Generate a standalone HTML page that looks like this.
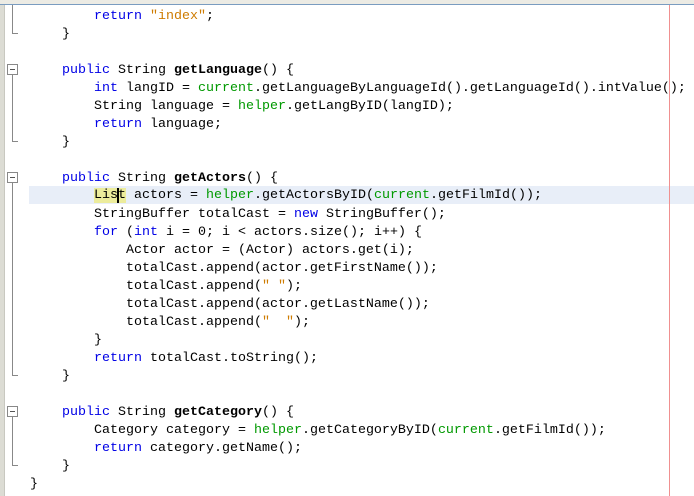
<!DOCTYPE html>
<html><head><style>
body{margin:0;width:694px;height:496px;overflow:hidden;background:#fff;position:relative;font-family:"Liberation Mono",monospace;font-size:13.33px;}
.top{position:absolute;left:0;top:0;width:694px;height:4px;background:#ecebe4;border-bottom:1px solid #7a9cc0;}
.strip{position:absolute;left:0;top:5px;width:4px;height:491px;background:#dcdcd4;border-right:1px solid #c8c8c0;}
.hl{position:absolute;left:29px;top:186px;width:665px;height:18px;background:#e8eef8;}
.margin{position:absolute;left:669px;top:5px;width:1px;height:491px;background:#f09090;}
.l{position:absolute;left:30px;height:18px;line-height:18px;margin-top:2px;white-space:pre;color:#000;}
.k{color:#0000e6}.g{color:#009900}.s{color:#ce7b00}b{font-weight:bold}
.box{position:absolute;left:7px;width:9px;height:9px;border:1px solid #888;background:#fff;}
.box:after{content:"";position:absolute;left:2px;top:4px;width:5px;height:1px;background:#555;}
.vl{position:absolute;left:12px;width:1px;background:#888;}
.end{position:absolute;left:12px;width:6px;height:1px;background:#888;}
.cur{background:#ecec9c}
.caret{position:absolute;left:117px;top:188px;width:2px;height:15px;background:#000;}
</style></head><body>
<div class="top"></div><div class="strip"></div><div class="hl"></div><div class="margin"></div>
<div class="vl" style="top:5px;height:28px"></div><div class="end" style="top:33px"></div>
<div class="box" style="top:64px"></div><div class="vl" style="top:75px;height:66px"></div><div class="end" style="top:141px"></div>
<div class="box" style="top:172px"></div><div class="vl" style="top:183px;height:192px"></div><div class="end" style="top:375px"></div>
<div class="box" style="top:406px"></div><div class="vl" style="top:417px;height:48px"></div><div class="end" style="top:465px"></div>
<div class="l" style="top:6px">        <span class="k">return</span> <span class="s">"index"</span>;</div>
<div class="l" style="top:24px">    }</div>
<div class="l" style="top:60px">    <span class="k">public</span> String <b>getLanguage</b>() {</div>
<div class="l" style="top:78px">        <span class="k">int</span> langID = <span class="g">current</span>.getLanguageByLanguageId().getLanguageId().intValue();</div>
<div class="l" style="top:96px">        String language = <span class="g">helper</span>.getLangByID(langID);</div>
<div class="l" style="top:114px">        <span class="k">return</span> language;</div>
<div class="l" style="top:132px">    }</div>
<div class="l" style="top:168px">    <span class="k">public</span> String <b>getActors</b>() {</div>
<div class="l" style="top:186px;margin-top:0;line-height:20px">        <span class="cur">List</span> actors = <span class="g">helper</span>.getActorsByID(<span class="g">current</span>.getFilmId());</div>
<div class="l" style="top:204px">        StringBuffer totalCast = <span class="k">new</span> StringBuffer();</div>
<div class="l" style="top:222px">        <span class="k">for</span> (<span class="k">int</span> i = 0; i &lt; actors.size(); i++) {</div>
<div class="l" style="top:240px">            Actor actor = (Actor) actors.get(i);</div>
<div class="l" style="top:258px">            totalCast.append(actor.getFirstName());</div>
<div class="l" style="top:276px">            totalCast.append(<span class="s">" "</span>);</div>
<div class="l" style="top:294px">            totalCast.append(actor.getLastName());</div>
<div class="l" style="top:312px">            totalCast.append(<span class="s">"  "</span>);</div>
<div class="l" style="top:330px">        }</div>
<div class="l" style="top:348px">        <span class="k">return</span> totalCast.toString();</div>
<div class="l" style="top:366px">    }</div>
<div class="l" style="top:402px">    <span class="k">public</span> String <b>getCategory</b>() {</div>
<div class="l" style="top:420px">        Category category = <span class="g">helper</span>.getCategoryByID(<span class="g">current</span>.getFilmId());</div>
<div class="l" style="top:438px">        <span class="k">return</span> category.getName();</div>
<div class="l" style="top:456px">    }</div>
<div class="l" style="top:474px">}</div>
<div class="caret"></div>
</body></html>
